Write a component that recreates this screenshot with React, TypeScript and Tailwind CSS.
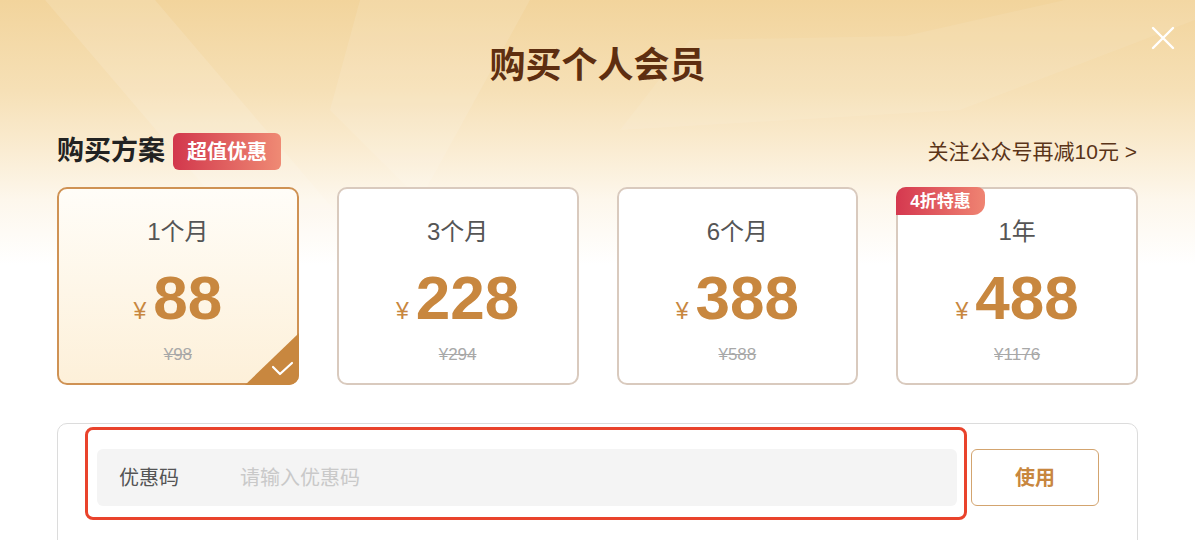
const FONT = { fontFamily: '"Liberation Sans", "Noto Sans CJK SC", sans-serif' };

type Plan = { label: string; price: string; origin: string; badge?: string; active?: boolean };

const PLANS: Plan[] = [
  { label: "1个月", price: "88", origin: "¥98", active: true },
  { label: "3个月", price: "228", origin: "¥294" },
  { label: "6个月", price: "388", origin: "¥588" },
  { label: "1年", price: "488", origin: "¥1176", badge: "4折特惠" },
];

function PlanCard({ plan }: { plan: Plan }) {
  return (
    <div
      className={`relative h-[198px] rounded-[10px] border-2 flex flex-col items-center pt-[28px] ${
        plan.active
          ? "border-[#cf9254] bg-[linear-gradient(180deg,#fffdf8_0%,#fdf0d9_100%)]"
          : "border-[#d9cabe] bg-white"
      }`}
    >
      {plan.badge && (
        <div className="absolute -top-[2px] -left-[2px] h-[28px] px-[14px] flex items-center rounded-tl-[10px] rounded-tr-[8px] rounded-br-[12px] bg-[linear-gradient(90deg,#d5384f_0%,#ef8472_100%)] text-white text-[17px] font-bold leading-none">
          {plan.badge}
        </div>
      )}
      <div className="text-[24px] leading-[30px] text-[#555]">{plan.label}</div>
      <div className="mt-[20px] flex items-baseline text-[#c8873f]">
        <span className="text-[23px] font-medium mr-[7px]">¥</span>
        <span className="text-[62px] leading-[62px] font-bold">{plan.price}</span>
      </div>
      <div className="mt-[16px] text-[17px] leading-[20px] text-[#a8a8a8] line-through">{plan.origin}</div>
      {plan.active && (
        <div className="absolute -right-[2px] -bottom-[2px] w-[54px] h-[52px] overflow-hidden rounded-br-[10px]">
          <svg width="54" height="52" viewBox="0 0 54 52">
            <polygon points="54,0 54,52 0,52" fill="#c8873f" />
            <polyline points="28,34 35,41 47,30" fill="none" stroke="#fff" strokeWidth="2.2" strokeLinecap="round" strokeLinejoin="round" />
          </svg>
        </div>
      )}
    </div>
  );
}

export default function App() {
  return (
    <div
      className="relative w-full h-[540px] overflow-hidden bg-[linear-gradient(180deg,#f2d49c_0px,#f6e0b6_90px,#faecd2_150px,#fdf7ec_200px,#ffffff_265px)]"
      style={FONT}
    >
      {/* light rays */}
      <svg className="absolute left-0 top-0 pointer-events-none" width="1195" height="260" viewBox="0 0 1195 260">
        <polygon points="45,0 155,0 360,240 250,240" fill="#fff" opacity="0.12" />
        <polygon points="360,0 530,0 420,200 330,110" fill="#fff" opacity="0.1" />
        <polygon points="690,40 905,36 1065,0 1195,0 1195,20 960,110 620,130" fill="#fff" opacity="0.08" />
      </svg>

      <button className="absolute left-[1151px] top-[26px]">
        <svg width="24" height="24" viewBox="0 0 24 24">
          <path d="M2 2 L22 22 M22 2 L2 22" stroke="#fff" strokeWidth="2.4" strokeLinecap="round" />
        </svg>
      </button>

      <div className="relative px-[57px] pt-[41px]">
        <h1 className="text-center text-[36px] leading-[50px] font-bold text-[#5e2e10]">购买个人会员</h1>

        <div className="mt-[42px] flex items-center justify-between">
          <div className="flex items-center gap-[8px]">
            <span className="text-[27px] leading-[37px] font-bold text-[#222]">购买方案</span>
            <span className="h-[37px] px-[14px] flex items-center rounded-[6px] bg-[linear-gradient(90deg,#d2374c_0%,#ef8a74_100%)] text-white text-[20px] font-bold">
              超值优惠
            </span>
          </div>
          <span className="text-[21px] text-[#5a3418] mr-[1px]">关注公众号再减10元 &gt;</span>
        </div>

        <div className="mt-[17px] grid grid-cols-4 gap-[38px]">
          {PLANS.map((p) => (
            <PlanCard key={p.label} plan={p} />
          ))}
        </div>

        <div className="mt-[38px] h-[140px] rounded-[10px] border border-[#dcdcdc] bg-white pl-[39px] pr-[38px] pt-[25px] flex gap-[14px]">
          <div className="relative flex-1 h-[57px]">
            <div className="h-full rounded-[6px] bg-[#f4f4f4] flex items-center pl-[22px] text-[20px]">
              <span className="text-[#555] w-[121px]">优惠码</span>
              <span className="text-[#c9c9c9]">请输入优惠码</span>
            </div>
            {/* highlight */}
            <div className="absolute -left-[12px] -top-[22px] -right-[10px] -bottom-[14px] border-[3px] border-[#e9432c] rounded-[8px] pointer-events-none" />
          </div>
          <button className="w-[128px] h-[57px] rounded-[6px] border-[1.5px] border-[#d3a46f] text-[#c8873f] text-[20px] font-bold bg-white">
            使用
          </button>
        </div>
      </div>
    </div>
  );
}
